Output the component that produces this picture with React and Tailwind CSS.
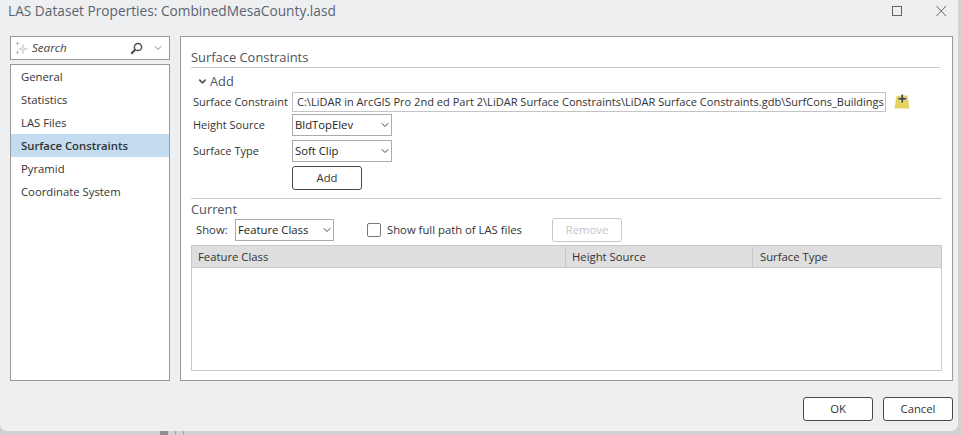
import { ChevronDown } from "lucide-react";

function Select({ value, width }) {
  return (
    <div className={`${width} h-[22px] border border-[#ababab] bg-white flex items-center justify-between pl-[2px] text-[11.3px] text-[#222]`}>
      <span>{value}</span>
      <ChevronDown size={12} strokeWidth={2} className="text-[#444]" />
    </div>
  );
}

function Button({ label, disabled }) {
  return (
    <button className={`w-[70px] h-[24px] pt-[1px] rounded-[3px] border bg-white text-[11.3px] ${disabled ? "border-[#c8c8c8] text-[#c4c4c4]" : "border-[#4a4a4a] text-[#333]"}`}>
      {label}
    </button>
  );
}

function FieldRow({ label, children, className }) {
  return (
    <div className={`flex items-center pl-[2px] ${className}`}>
      <span className="w-[99px] shrink-0 whitespace-nowrap text-[11px] text-[#333]">{label}</span>
      {children}
    </div>
  );
}

function SearchSparkle() {
  return (
    <svg width="16" height="16" viewBox="0 0 16 16" fill="none">
      <path d="M9 4.500 L10 8 L13.500 9 L10 10 L9 13.500 L8 10 L4.500 9 L8 8 Z" fill="#e4e4e4" stroke="#c4c4c4" strokeWidth="0.6" />
      <path d="M3.500 1.500v4M1.500 3.500h4M3.500 10.500v4M1.500 12.500h4" stroke="#b4b4b4" strokeWidth="0.8" />
    </svg>
  );
}

function Magnifier() {
  return (
    <svg width="13" height="13" viewBox="0 0 13 13" fill="none">
      <circle cx="8" cy="5" r="3.600" stroke="#4f4f4f" strokeWidth="1.500" />
      <path d="M5.200 7.800 L1.200 11.800" stroke="#4f4f4f" strokeWidth="2.200" />
    </svg>
  );
}

function AddFolderIcon() {
  return (
    <svg width="16" height="15" viewBox="0 0 16 15" className="ml-[8px] -mt-[1px]">
      <path d="M2.500 2 L13.500 1.500 L15.500 14.500 L0.500 14.500 Z" fill="#e6d35f" />
      <path d="M4 3.500h3v-3h2.500v3h3v2.500h-3v3h-2.500v-3h-3z" fill="#4a4a4a" stroke="#f7f1c8" strokeWidth="0.6" />
    </svg>
  );
}

export default function App() {
  const navItems = ["General", "Statistics", "LAS Files", "Surface Constraints", "Pyramid", "Coordinate System"];

  return (
    <div className="font-['Open_Sans',sans-serif] w-[961px] h-[435px] overflow-hidden bg-[#d2d2d2]">
      <div className="w-[958px] h-[431px] bg-[#eeeff1] rounded-b-[7px] flex flex-col">
        {/* title bar */}
        <div className="h-[36px] shrink-0 flex items-start justify-between pl-[8px]">
          <span className="text-[13.7px] leading-[22px] text-[#5a6370]">LAS Dataset Properties: CombinedMesaCounty.lasd</span>
          <svg width="56" height="12" viewBox="0 0 56 12" fill="none" className="mt-[5px] mr-[11px]">
            <rect x="1.500" y="1.500" width="9" height="9" stroke="#666" />
            <path d="M45.500 1 L55 11 M55 1 L45.500 11" stroke="#666" />
          </svg>
        </div>

        <div className="flex pl-[10px] gap-[10px] h-[345px] shrink-0">
          {/* left column */}
          <div className="w-[160px] shrink-0 flex flex-col gap-[4px]">
            <div className="h-[24px] border border-[#999] bg-white flex items-center pl-[3px] pr-[5px]">
              <SearchSparkle />
              <span className="ml-[2px] text-[11.6px] italic text-[#444] flex-1">Search</span>
              <Magnifier />
              <ChevronDown size={12} strokeWidth={1.500} className="text-[#666] ml-[9px]" />
            </div>
            <div className="flex-1 border border-[#999] bg-white">
              {navItems.map((item) => (
                <div
                  key={item}
                  className={`h-[23px] pl-[10px] pt-[2px] flex items-center text-[11.3px] ${item === "Surface Constraints" ? "bg-[#c3dcef] font-semibold text-[#333]" : "text-[#333]"}`}
                >
                  {item}
                </div>
              ))}
            </div>
          </div>

          {/* right panel */}
          <div className="w-[773px] shrink-0 border border-[#999] bg-white pl-[10px] pr-[10px] pt-[10px] flex flex-col">
            <div className="h-[21px] text-[12.9px] leading-[20px] text-[#4a5360] border-b border-[#c8c8c8] mr-[2px]">Surface Constraints</div>
            <div className="flex items-center gap-[2px] pl-[6px] pt-[2px] h-[25px]">
              <ChevronDown size={11} strokeWidth={3.500} className="text-[#555]" />
              <span className="text-[12.8px] text-[#4a5360]">Add</span>
            </div>
            <FieldRow label="Surface Constraint" className="h-[20px] -mt-[1px]">
              <div className="w-[594px] h-[20px] shrink-0 border border-[#c4c4c4] bg-white pl-[4px] text-[11.05px] leading-[18px] text-[#333] overflow-hidden whitespace-nowrap">
                C:\LiDAR in ArcGIS Pro 2nd ed Part 2\LiDAR Surface Constraints\LiDAR Surface Constraints.gdb\SurfCons_Buildings
              </div>
              <AddFolderIcon />
            </FieldRow>
            <FieldRow label="Height Source" className="mt-[2px] h-[22px]">
              <Select value="BldTopElev" width="w-[100px]" />
            </FieldRow>
            <FieldRow label="Surface Type" className="mt-[4px] h-[22px]">
              <Select value="Soft Clip" width="w-[100px]" />
            </FieldRow>
            <div className="flex pl-[101px] mt-[4px]">
              <Button label="Add" />
            </div>

            <div className="border-t border-[#c8c8c8] mt-[8px] pt-[1px] text-[12.8px] leading-[18px] text-[#4a5360]">Current</div>
            <div className="flex items-center h-[24px] pl-[5px]">
              <span className="text-[11.3px] text-[#333] w-[39px]">Show:</span>
              <Select value="Feature Class" width="w-[99px]" />
              <div className="ml-[33px] w-[14px] h-[14px] rounded-[2px] border border-[#777] bg-white" />
              <span className="ml-[6px] w-[165px] text-[11.3px] text-[#333]">Show full path of LAS files</span>
              <Button label="Remove" disabled />
            </div>

            <div className="mt-[3px] h-[126px] border border-[#c8c8c8] bg-white">
              <div className="h-[22px] pt-[1px] bg-[#dedede] border-b border-[#c8c8c8] grid grid-cols-[374px_187px_1fr] text-[11.3px] text-[#333]">
                <div className="pl-[6px] flex items-center border-r border-[#c8c8c8]">Feature Class</div>
                <div className="pl-[6px] flex items-center border-r border-[#c8c8c8]">Height Source</div>
                <div className="pl-[7px] flex items-center">Surface Type</div>
              </div>
            </div>
          </div>
        </div>

        {/* footer */}
        <div className="flex justify-end gap-[10px] pr-[5px] pt-[16px]">
          <Button label="OK" />
          <Button label="Cancel" />
        </div>
      </div>

      {/* what shows of the window behind */}
      <div className="flex h-[4px] pl-[160px]">
        <div className="w-[8px] bg-[#8f8f8f]" />
        <div className="w-[7px]" />
        <div className="w-[1px] bg-[#a8a8a8]" />
        <div className="w-[7px]" />
        <div className="w-[1px] bg-[#a8a8a8]" />
      </div>
    </div>
  );
}
